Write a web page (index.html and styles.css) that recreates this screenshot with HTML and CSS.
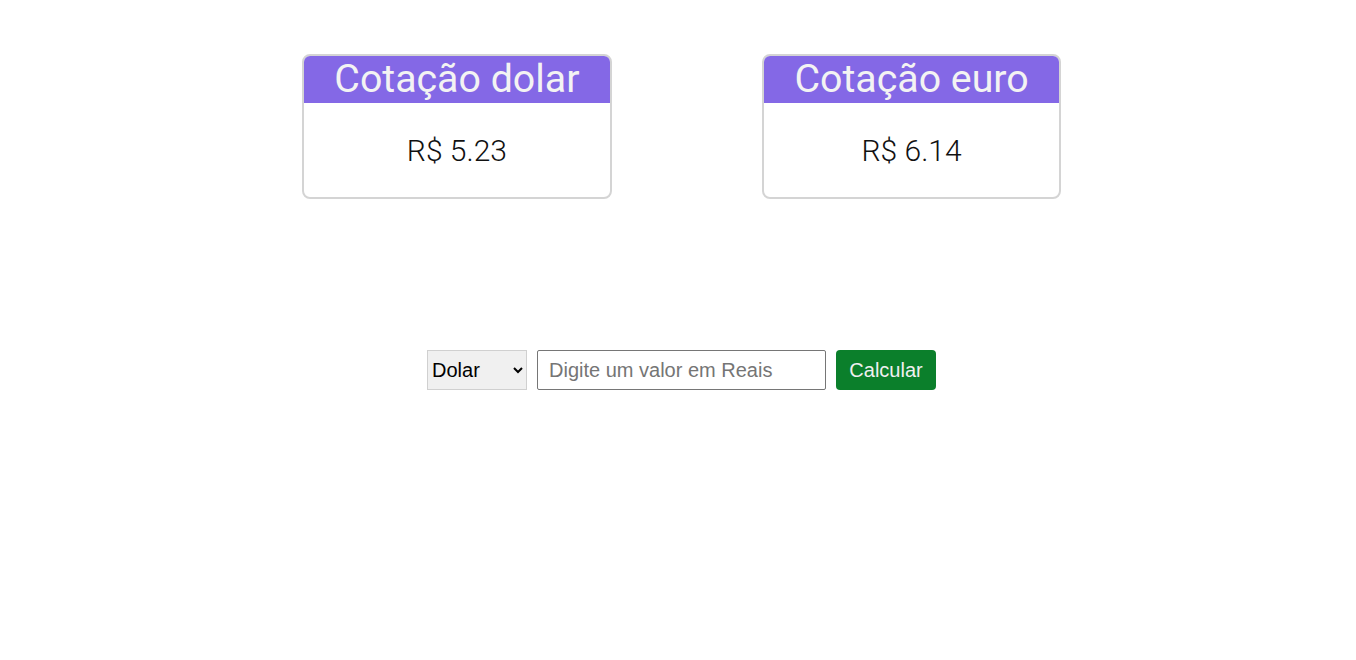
FILE: index.html
```html
<!DOCTYPE html>
<html lang="pt-BR">
<head>
<meta charset="utf-8">
<title>Cotação</title>
<link rel="stylesheet" href="styles.css">
</head>
<body>
<main class="page">
  <section class="cards">
    <div class="card">
      <h2 class="card-title">Cotação dolar</h2>
      <p class="card-value">R$ 5.23</p>
    </div>
    <div class="card">
      <h2 class="card-title">Cotação euro</h2>
      <p class="card-value">R$ 6.14</p>
    </div>
  </section>
  <form class="converter">
    <select class="currency">
      <option>Dolar</option>
      <option>Euro</option>
    </select>
    <input class="amount" type="text" placeholder="Digite um valor em Reais">
    <button class="calc" type="button">Calcular</button>
  </form>
</main>
</body>
</html>
```
FILE: styles.css
```css
* { box-sizing: border-box; }
html, body { margin: 0; padding: 0; background: #fff; }
body { font-family: Roboto, "Liberation Sans", sans-serif; }
.page { padding-top: 54px; }
.cards {
  display: flex;
  justify-content: center;
  gap: 150px;
  padding-left: 7px;
}
.card {
  border: 2px solid #d4d4d4;
  border-radius: 8px;
  overflow: hidden;
  height: 145px;
  display: flex;
  flex-direction: column;
}
.card-title {
  margin: 0;
  background: #8468e6;
  color: #f3f3f3;
  font-family: Roboto, sans-serif;
  font-weight: 400;
  font-size: 39.3px;
  line-height: 47px;
  padding: 0 30.5px;
  text-align: center;
  white-space: nowrap;
}
.card-value {
  margin: 0;
  flex: 1;
  display: flex;
  align-items: center;
  justify-content: center;
  font-family: Roboto, sans-serif;
  font-weight: 300;
  font-size: 30px;
  color: #111;
}
.converter {
  margin-top: 151px;
  display: flex;
  justify-content: center;
  gap: 10px;
  padding-left: 7px;
  font-family: "Liberation Sans", Arial, sans-serif;
}
.currency {
  width: 100px;
  height: 40px;
  font-family: "Liberation Sans", Arial, sans-serif;
  font-size: 20px;
  background: #f0f0f0;
  border: 1px solid #d0d0d0;
  border-radius: 0;
  color: #000;
}
.amount {
  width: 289px;
  height: 40px;
  font-family: "Liberation Sans", Arial, sans-serif;
  font-size: 20px;
  padding: 0 11px;
  border: 1px solid #767676;
  border-radius: 2px;
}
.amount::placeholder { color: #757575; }
.calc {
  width: 100px;
  height: 40px;
  border: none;
  border-radius: 4px;
  background: #0b7f2b;
  color: #f0f0f0;
  font-family: "Liberation Sans", Arial, sans-serif;
  font-size: 20px;
  padding: 0;
}
```
